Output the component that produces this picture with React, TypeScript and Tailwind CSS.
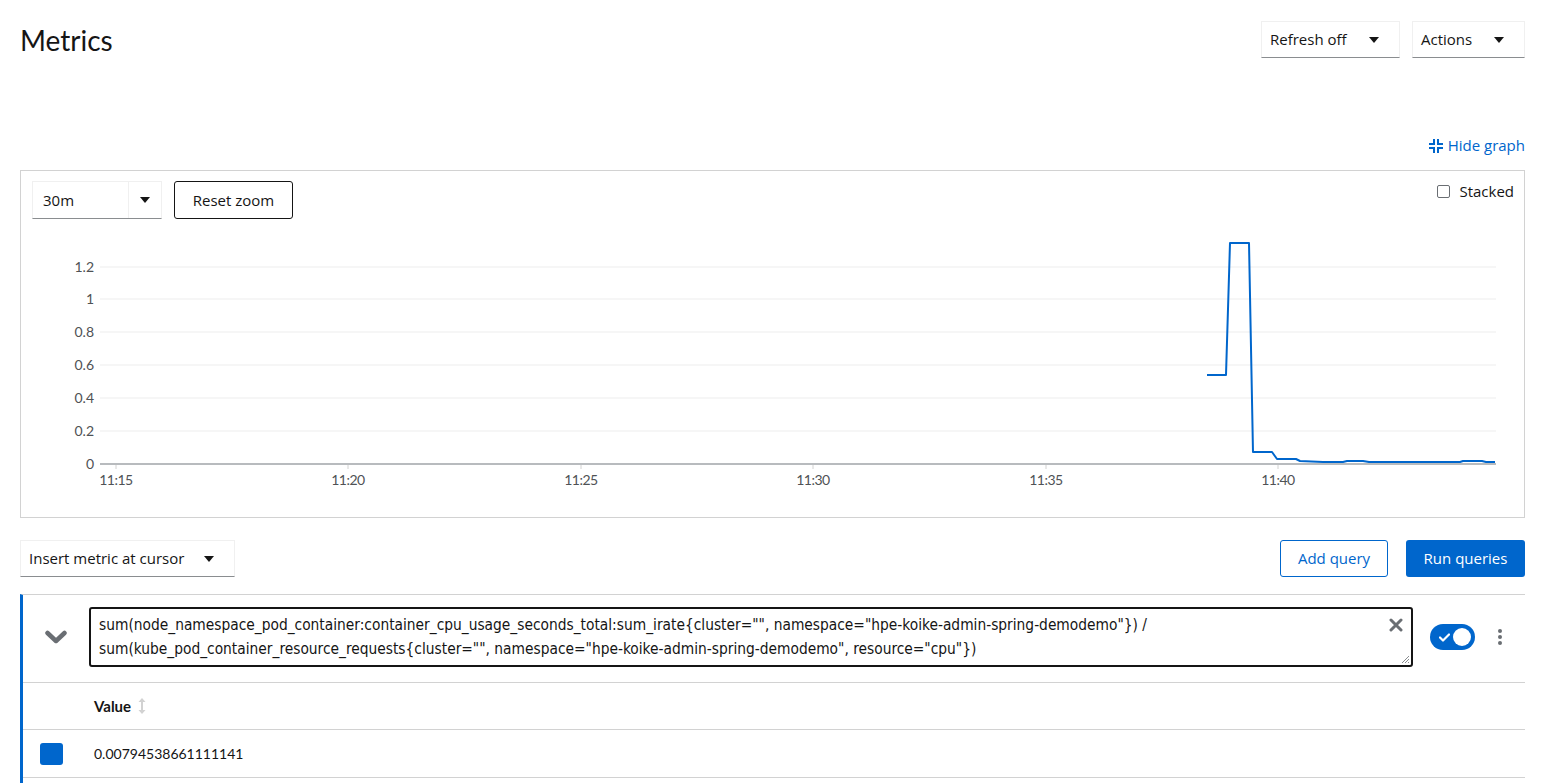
import React from 'react';

const UI = { fontFamily: '"Open Sans", Lato, sans-serif' };
const TITLE = { fontFamily: 'Lato, "Open Sans", sans-serif' };
const CHART = { fontFamily: 'Lato, "Open Sans", sans-serif' };
const QUERY = { fontFamily: '"Liberation Sans Narrow", "DejaVu Sans Condensed", "Roboto Condensed", "Liberation Sans", sans-serif' };

const Caret: React.FC = () => (
  <svg width="10" height="6" viewBox="0 0 10 6" className="shrink-0">
    <path d="M0 0 L10 0 L5 6 Z" fill="#151515" />
  </svg>
);

const Select: React.FC<{ label: string; className: string }> = ({ label, className }) => (
  <div
    className={`flex items-center justify-between border border-[#f0f0f0] border-b-[#8a8d90] bg-white pl-[8px] pr-[20px] text-[15px] text-[#151515] ${className}`}
  >
    <span>{label}</span>
    <Caret />
  </div>
);

// chart coords are inside the svg (origin = x 21, y 219 of the page)
const yTicks = [
  { v: '1.2', y: 48 },
  { v: '1', y: 80 },
  { v: '0.8', y: 113 },
  { v: '0.6', y: 146 },
  { v: '0.4', y: 179 },
  { v: '0.2', y: 212 },
];
const xTicks = [
  { t: '11:15', x: 95 },
  { t: '11:20', x: 327 },
  { t: '11:25', x: 560 },
  { t: '11:30', x: 792 },
  { t: '11:35', x: 1025 },
  { t: '11:40', x: 1257 },
];
const series = [
  [1186, 156], [1205, 156], [1209, 24], [1228, 24], [1232, 233], [1251, 233],
  [1256, 240], [1275, 240], [1279, 242], [1302, 243], [1322, 243], [1326, 242],
  [1342, 242], [1348, 243], [1392, 243], [1439, 243], [1442, 242], [1461, 242],
  [1465, 243], [1474, 243],
];

const Chart: React.FC = () => (
  <svg width="1503" height="297" className="block" style={CHART}>
    {yTicks.map((t) => (
      <g key={t.v}>
        <line x1="79" x2="1475" y1={t.y} y2={t.y} stroke="#ededed" strokeWidth="1" />
        <text x="73" y={t.y + 5} textAnchor="end" fontSize="14" fill="#4f5255">
          {t.v}
        </text>
      </g>
    ))}
    <text x="73" y="250" textAnchor="end" fontSize="14" fill="#4f5255">
      0
    </text>
    {xTicks.map((t) => (
      <g key={t.t}>
        <line x1={t.x} x2={t.x} y1="245" y2="250" stroke="#d2d2d2" strokeWidth="1" />
        <text x={t.x} y="266" textAnchor="middle" fontSize="14" fill="#4f5255" letterSpacing="-0.5">
          {t.t}
        </text>
      </g>
    ))}
    <line x1="79" x2="1475" y1="245" y2="245" stroke="#b8bbbe" strokeWidth="2" />
    <polyline
      points={series.map((p) => p.join(',')).join(' ')}
      fill="none"
      stroke="#0066cc"
      strokeWidth="2"
      strokeLinejoin="round"
    />
  </svg>
);

const CompressIcon: React.FC = () => (
  <svg width="14" height="14" viewBox="0 0 14 14" className="shrink-0">
    <path d="M4 0 h2 v6 h-6 v-2 h4 Z" fill="#0066cc" />
    <path d="M8 0 h2 v4 h4 v2 h-6 Z" fill="#0066cc" />
    <path d="M0 8 h6 v6 h-2 v-4 h-4 Z" fill="#0066cc" />
    <path d="M8 8 h6 v2 h-4 v4 h-2 Z" fill="#0066cc" />
  </svg>
);

const App: React.FC = () => {
  return (
    <div className="min-h-[783px] bg-white pl-[20px] pr-[31px] pt-[21px] text-[#151515]" style={UI}>
      {/* Header */}
      <div className="flex h-[37px] items-center justify-between">
        <h1 className="text-[28px] leading-none" style={TITLE}>
          Metrics
        </h1>
        <div className="flex gap-[12px]">
          <Select label="Refresh off" className="h-[37px] w-[139px]" />
          <Select label="Actions" className="h-[37px] w-[113px]" />
        </div>
      </div>

      <div className="mt-[77px] flex h-[21px] items-center justify-end gap-[5px] text-[15px] text-[#0066cc]">
        <CompressIcon />
        <span>Hide graph</span>
      </div>

      {/* Graph card */}
      <div className="mt-[14px] flex h-[348px] flex-col border border-[#d2d2d2]">
        <div className="flex items-start justify-between pl-[11px] pr-[10px] pt-[10px]">
          <div className="flex gap-[12px]">
            <div className="flex h-[38px] w-[130px] border border-[#f0f0f0] border-b-[#8a8d90] text-[15px]">
              <div className="flex flex-1 items-center pl-[10px]">30m</div>
              <div className="flex w-[33px] items-center justify-center border-l border-[#f0f0f0]">
                <Caret />
              </div>
            </div>
            <button className="h-[38px] w-[119px] rounded-[3px] border border-[#151515] text-[15px] text-[#151515]">
              Reset zoom
            </button>
          </div>
          <label className="flex h-[20px] items-center gap-[9px] text-[15px]">
            <span className="h-[13px] w-[13px] rounded-[2px] border border-[#6a6e73] bg-white" />
            Stacked
          </label>
        </div>
        <Chart />
      </div>

      {/* Query toolbar */}
      <div className="mt-[22px] flex h-[37px] items-stretch justify-between">
        <Select label="Insert metric at cursor" className="w-[215px]" />
        <div className="flex gap-[18px]">
          <button className="w-[108px] rounded-[3px] border border-[#0066cc] text-[15px] text-[#0066cc]">
            Add query
          </button>
          <button className="w-[119px] rounded-[3px] bg-[#0066cc] text-[15px] text-white">Run queries</button>
        </div>
      </div>

      {/* Query panel */}
      <div className="mt-[17px] border-l-[3px] border-t border-[#d2d2d2] border-l-[#0066cc] pb-[10px]">
        <div className="flex items-start border-b border-[#d2d2d2] pb-[15px] pt-[12px]">
          <div className="flex h-[60px] w-[66px] items-center justify-center">
            <svg width="22" height="14" viewBox="0 0 22 14">
              <path d="M2.5 3 L11 11 L19.5 3" fill="none" stroke="#6a6e73" strokeWidth="4.5" strokeLinecap="round" strokeLinejoin="round" />
            </svg>
          </div>
          <div className="relative h-[60px] flex-1 rounded-[3px] border-2 border-[#151515] pl-[8px] pr-[40px] pt-[4px]">
            <div className="text-[15.35px] leading-[24px] text-[#151515]" style={QUERY}>
              <div className="whitespace-nowrap">
                sum(node_namespace_pod_container:container_cpu_usage_seconds_total:sum_irate{'{'}cluster="", namespace="hpe-koike-admin-spring-demodemo"{'}'}) /
              </div>
              <div className="whitespace-nowrap">
                sum(kube_pod_container_resource_requests{'{'}cluster="", namespace="hpe-koike-admin-spring-demodemo", resource="cpu"{'}'})
              </div>
            </div>
            <svg width="14" height="14" viewBox="0 0 14 14" className="absolute right-[8px] top-[9px]">
              <path d="M2 2 L12 12 M12 2 L2 12" stroke="#6a6e73" strokeWidth="3" strokeLinecap="round" />
            </svg>
            <svg width="10" height="10" viewBox="0 0 10 10" className="absolute bottom-[1px] right-[1px]">
              <path d="M9 2 L2 9 M9 5 L5 9 M9 8 L8 9" stroke="#8a8d90" strokeWidth="1" />
            </svg>
          </div>
          <div className="ml-[17px] flex h-[60px] items-center">
            <div className="flex h-[26px] w-[45px] items-center justify-between rounded-full bg-[#0066cc] pl-[9px] pr-[4px]">
              <svg width="11" height="9" viewBox="0 0 11 9">
                <path d="M1 4.5 L4 7.5 L10 1.5" fill="none" stroke="white" strokeWidth="2.2" strokeLinecap="round" strokeLinejoin="round" />
              </svg>
              <span className="h-[18px] w-[18px] rounded-full bg-white" />
            </div>
          </div>
          <div className="flex h-[60px] w-[50px] items-center justify-center">
            <div className="flex flex-col gap-[2px]">
              <span className="h-[4px] w-[4px] rounded-full bg-[#6a6e73]" />
              <span className="h-[4px] w-[4px] rounded-full bg-[#6a6e73]" />
              <span className="h-[4px] w-[4px] rounded-full bg-[#6a6e73]" />
            </div>
          </div>
        </div>

        {/* Table */}
        <div className="flex h-[47px] items-center border-b border-[#d2d2d2]">
          <div className="w-[71px]" />
          <span className="text-[15px] font-bold" style={CHART}>
            Value
          </span>
          <svg width="8" height="18" viewBox="0 0 8 18" className="ml-[7px]">
            <path d="M4 1 L7.5 5 H5 V13 H7.5 L4 17 L0.5 13 H3 V5 H0.5 Z" fill="#d2d2d2" />
          </svg>
        </div>
        <div className="flex h-[48px] items-center border-b border-[#d2d2d2]">
          <div className="w-[71px] pl-[17px]">
            <div className="h-[22px] w-[23px] rounded-[3px] bg-[#0066cc]" />
          </div>
          <span className="text-[14px]" style={CHART}>
            0.00794538661111141
          </span>
        </div>
      </div>
    </div>
  );
};

export default App;
